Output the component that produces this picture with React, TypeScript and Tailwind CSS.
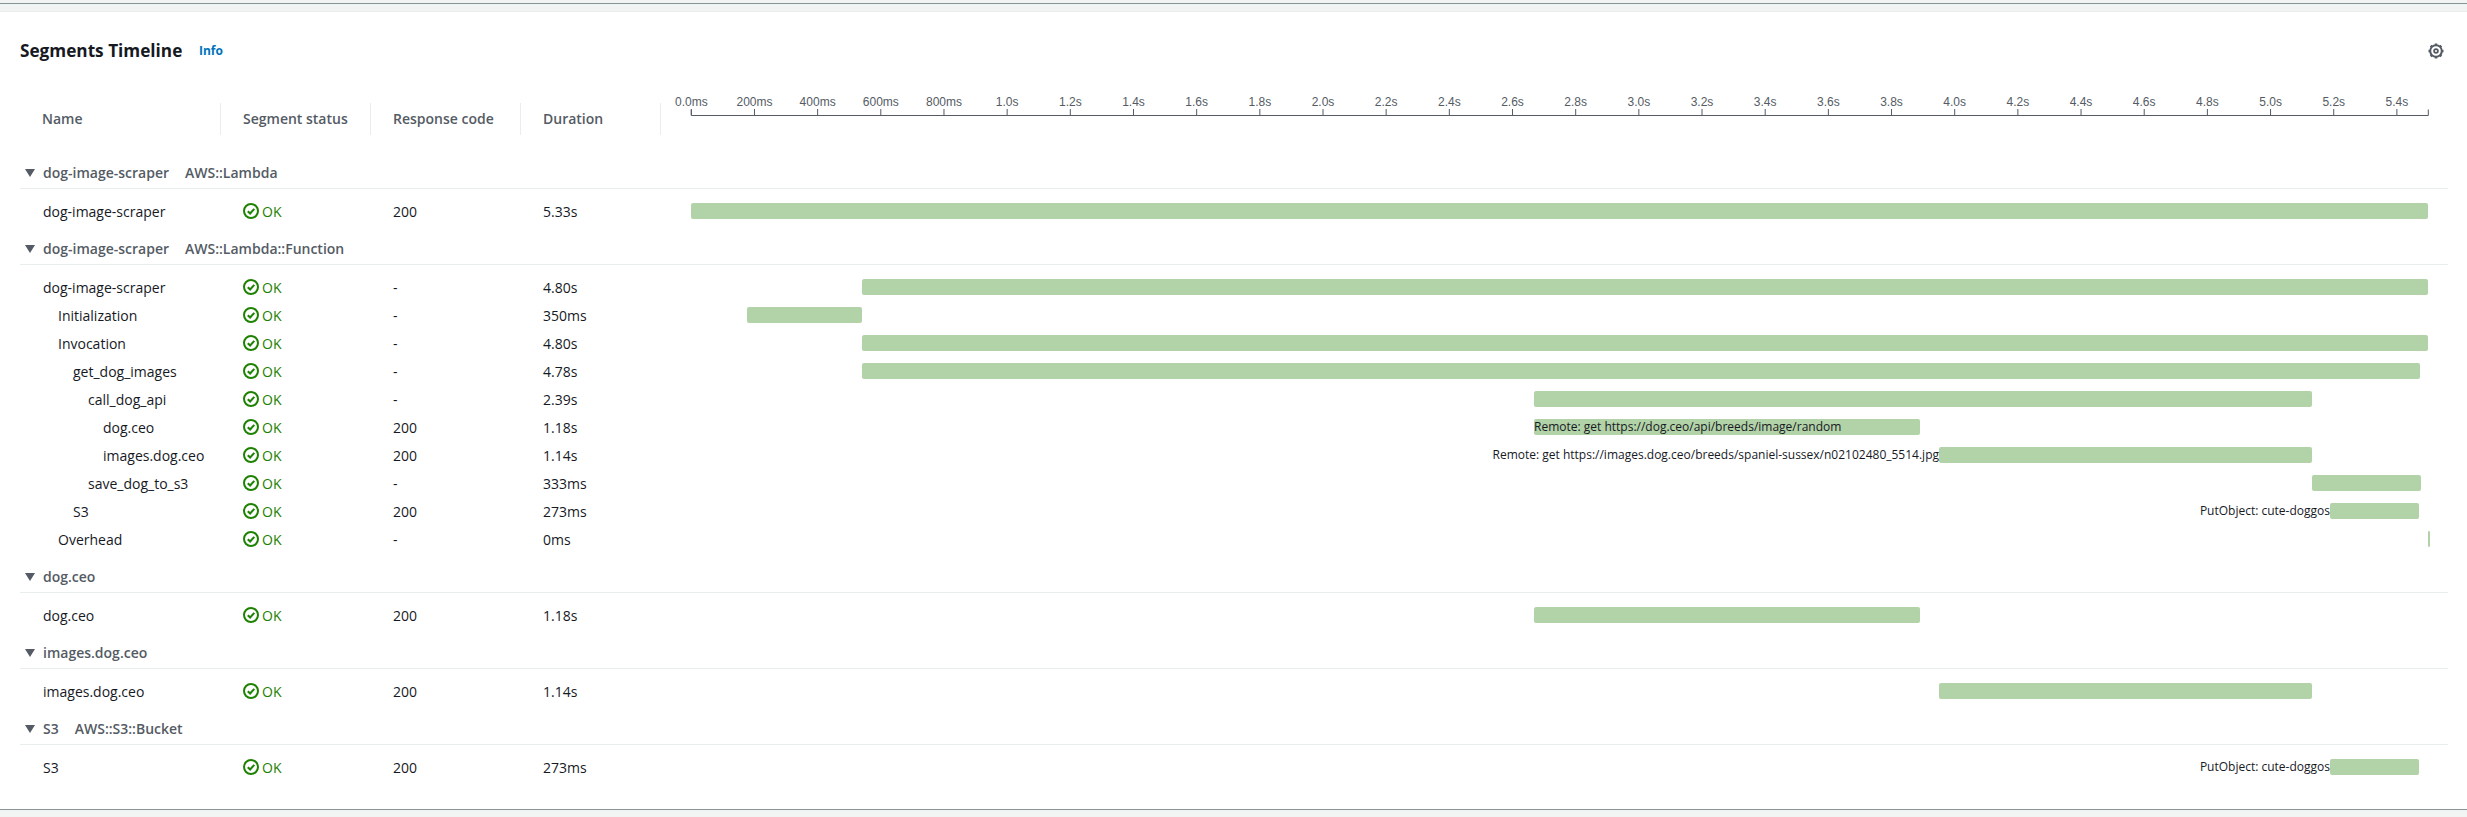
import { ReactNode } from 'react';

const SCALE_START = 691.3;
const TIMELINE_LEFT = 661;

interface Bar {
  from: number;
  to: number;
  label?: string;
  labelSide?: 'inside' | 'left';
}

interface Row {
  name: string;
  depth: number;
  code: string;
  duration: string;
  bar: Bar;
}

interface Group {
  name: string;
  origin?: string;
  rows: Row[];
}

const GROUPS: Group[] = [
  {
    name: 'dog-image-scraper',
    origin: 'AWS::Lambda',
    rows: [{ name: 'dog-image-scraper', depth: 0, code: '200', duration: '5.33s', bar: { from: 691, to: 2428 } }],
  },
  {
    name: 'dog-image-scraper',
    origin: 'AWS::Lambda::Function',
    rows: [
      { name: 'dog-image-scraper', depth: 0, code: '-', duration: '4.80s', bar: { from: 862, to: 2428 } },
      { name: 'Initialization', depth: 1, code: '-', duration: '350ms', bar: { from: 747, to: 862 } },
      { name: 'Invocation', depth: 1, code: '-', duration: '4.80s', bar: { from: 862, to: 2428 } },
      { name: 'get_dog_images', depth: 2, code: '-', duration: '4.78s', bar: { from: 862, to: 2420 } },
      { name: 'call_dog_api', depth: 3, code: '-', duration: '2.39s', bar: { from: 1534, to: 2312 } },
      {
        name: 'dog.ceo',
        depth: 4,
        code: '200',
        duration: '1.18s',
        bar: { from: 1534, to: 1920, label: 'Remote: get https://dog.ceo/api/breeds/image/random', labelSide: 'inside' },
      },
      {
        name: 'images.dog.ceo',
        depth: 4,
        code: '200',
        duration: '1.14s',
        bar: {
          from: 1939,
          to: 2312,
          label: 'Remote: get https://images.dog.ceo/breeds/spaniel-sussex/n02102480_5514.jpg',
          labelSide: 'left',
        },
      },
      { name: 'save_dog_to_s3', depth: 3, code: '-', duration: '333ms', bar: { from: 2312, to: 2421 } },
      {
        name: 'S3',
        depth: 2,
        code: '200',
        duration: '273ms',
        bar: { from: 2330, to: 2419, label: 'PutObject: cute-doggos', labelSide: 'left' },
      },
      { name: 'Overhead', depth: 1, code: '-', duration: '0ms', bar: { from: 2428, to: 2430 } },
    ],
  },
  {
    name: 'dog.ceo',
    rows: [{ name: 'dog.ceo', depth: 0, code: '200', duration: '1.18s', bar: { from: 1534, to: 1920 } }],
  },
  {
    name: 'images.dog.ceo',
    rows: [{ name: 'images.dog.ceo', depth: 0, code: '200', duration: '1.14s', bar: { from: 1939, to: 2312 } }],
  },
  {
    name: 'S3',
    origin: 'AWS::S3::Bucket',
    rows: [
      {
        name: 'S3',
        depth: 0,
        code: '200',
        duration: '273ms',
        bar: { from: 2330, to: 2419, label: 'PutObject: cute-doggos', labelSide: 'left' },
      },
    ],
  },
];

const TICKS = [
  '0.0ms', '200ms', '400ms', '600ms', '800ms', '1.0s', '1.2s', '1.4s', '1.6s', '1.8s', '2.0s', '2.2s', '2.4s', '2.6s',
  '2.8s', '3.0s', '3.2s', '3.4s', '3.6s', '3.8s', '4.0s', '4.2s', '4.4s', '4.6s', '4.8s', '5.0s', '5.2s', '5.4s',
];

function StatusIcon() {
  return (
    <svg viewBox="0 0 16 16" className="w-[16px] h-[16px] shrink-0" fill="none" stroke="#1d8102" strokeWidth="2">
      <circle cx="8" cy="8" r="7" />
      <path d="M4.8 8.2l2.3 2.3 4.2-4.6" />
    </svg>
  );
}

function GearIcon() {
  return (
    <svg viewBox="0 0 16 16" className="w-[16px] h-[16px]" fill="none" stroke="#545b64" strokeWidth="2">
      <circle cx="8" cy="8" r="5.800" />
      <circle cx="8" cy="8" r="1.900" strokeWidth="1.800" />
      <path
        d="M8 0.500v2M8 13.500v2M0.500 8h2M13.500 8h2M2.700 2.700l1.400 1.400M11.900 11.900l1.400 1.400M2.700 13.300l1.400-1.400M11.900 4.100l1.400-1.400"
        strokeWidth="2.400"
      />
    </svg>
  );
}

function Axis() {
  const ox = SCALE_START - TIMELINE_LEFT;
  return (
    <svg width={1787} height={40} className="block" fontFamily="'Liberation Sans', sans-serif">
      <path d={`M${ox} 18.500V24.500H${ox + 1737}V18.500`} fill="none" stroke="#545b64" />
      {TICKS.map((t, i) => {
        const x = ox + i * 63.17;
        return (
          <g key={t}>
            <line x1={x} x2={x} y1={18} y2={24} stroke="#545b64" />
            <text x={x} y={15} textAnchor="middle" fontSize="12" fill="#545b64">{t}</text>
          </g>
        );
      })}
    </svg>
  );
}

function HeaderCell({ width, children }: { width: string; children: ReactNode }) {
  return (
    <div className={`${width} shrink-0 h-[32px] flex items-center pl-[22px] pb-[2px] border-r border-[#eaeded] text-[14px] font-semibold text-[#545b64]`}>
      {children}
    </div>
  );
}

function TimelineBar({ bar }: { bar: Bar }) {
  return (
    <div className="flex-1 h-full flex items-center">
      <div
        className="relative h-[16px] shrink-0 rounded-[2px] bg-[#b2d2a8]"
        style={{ marginLeft: bar.from - TIMELINE_LEFT, width: bar.to - bar.from }}
      >
        {bar.label && bar.labelSide === 'inside' && (
          <span className="absolute left-0 top-0 leading-[16px] text-[12px] whitespace-nowrap text-[#16191f]">{bar.label}</span>
        )}
        {bar.label && bar.labelSide === 'left' && (
          <span className="absolute right-full top-0 leading-[16px] text-[12px] whitespace-nowrap text-[#16191f]">{bar.label}</span>
        )}
      </div>
    </div>
  );
}

function SegmentRow({ row }: { row: Row }) {
  return (
    <div className="flex h-[28px] items-center text-[14px] text-[#16191f]">
      <div className="w-[201px] shrink-0" style={{ paddingLeft: 23 + row.depth * 15 }}>{row.name}</div>
      <div className="w-[150px] shrink-0 pl-[22px] flex items-center gap-[3px] text-[#1d8102]">
        <StatusIcon />
        <span>OK</span>
      </div>
      <div className="w-[150px] shrink-0 pl-[22px]">{row.code}</div>
      <div className="w-[140px] shrink-0 pl-[22px]">{row.duration}</div>
      <TimelineBar bar={row.bar} />
    </div>
  );
}

function SegmentGroup({ group }: { group: Group }) {
  return (
    <section>
      <div className="h-[40px] flex items-end pb-[5px] border-b border-[#eaeded] text-[14px] font-semibold text-[#545b64]">
        <span className="w-[23px] pl-[5px] pb-[6px]">
          <svg viewBox="0 0 10 8" className="block w-[10px] h-[8px]"><path d="M0 0h10L5 8z" fill="#545b64" /></svg>
        </span>
        <span>{group.name}</span>
        {group.origin && <span className="ml-[16px]">{group.origin}</span>}
      </div>
      <div className="pt-[8px]">
        {group.rows.map((row, i) => (
          <SegmentRow key={i} row={row} />
        ))}
      </div>
    </section>
  );
}

export default function App() {
  return (
    <div className="min-h-[817px] bg-[#f2f3f3] font-['Open_Sans','Noto_Sans',sans-serif]">
      <div className="h-[3px]" />
      <div className="h-[1px] bg-[#879596]" />
      <div className="h-[7px]" />
      <div className="h-[799px] bg-white border-t border-[#eaeded] border-b border-b-[#879596] pl-[20px] pr-[19px]">
        <div className="h-[76px] flex items-center justify-between pt-[1px]">
          <div className="flex items-center">
            <h2 className="w-[179px] whitespace-nowrap text-[17.200px] font-bold text-[#16191f]">Segments Timeline</h2>
            <span className="text-[12px] font-bold text-[#0073bb] pt-[2px]">Info</span>
          </div>
          <span className="mr-[4px]"><GearIcon /></span>
        </div>
        <div className="flex h-[32px] mt-[15px] items-start">
          <HeaderCell width="w-[201px]">Name</HeaderCell>
          <HeaderCell width="w-[150px]">Segment status</HeaderCell>
          <HeaderCell width="w-[150px]">Response code</HeaderCell>
          <HeaderCell width="w-[140px]">Duration</HeaderCell>
          <div className="-mt-[12px]">
            <Axis />
          </div>
        </div>
        <div className="mt-[14px]">
          {GROUPS.map((g, i) => (
            <SegmentGroup key={i} group={g} />
          ))}
        </div>
      </div>
    </div>
  );
}
